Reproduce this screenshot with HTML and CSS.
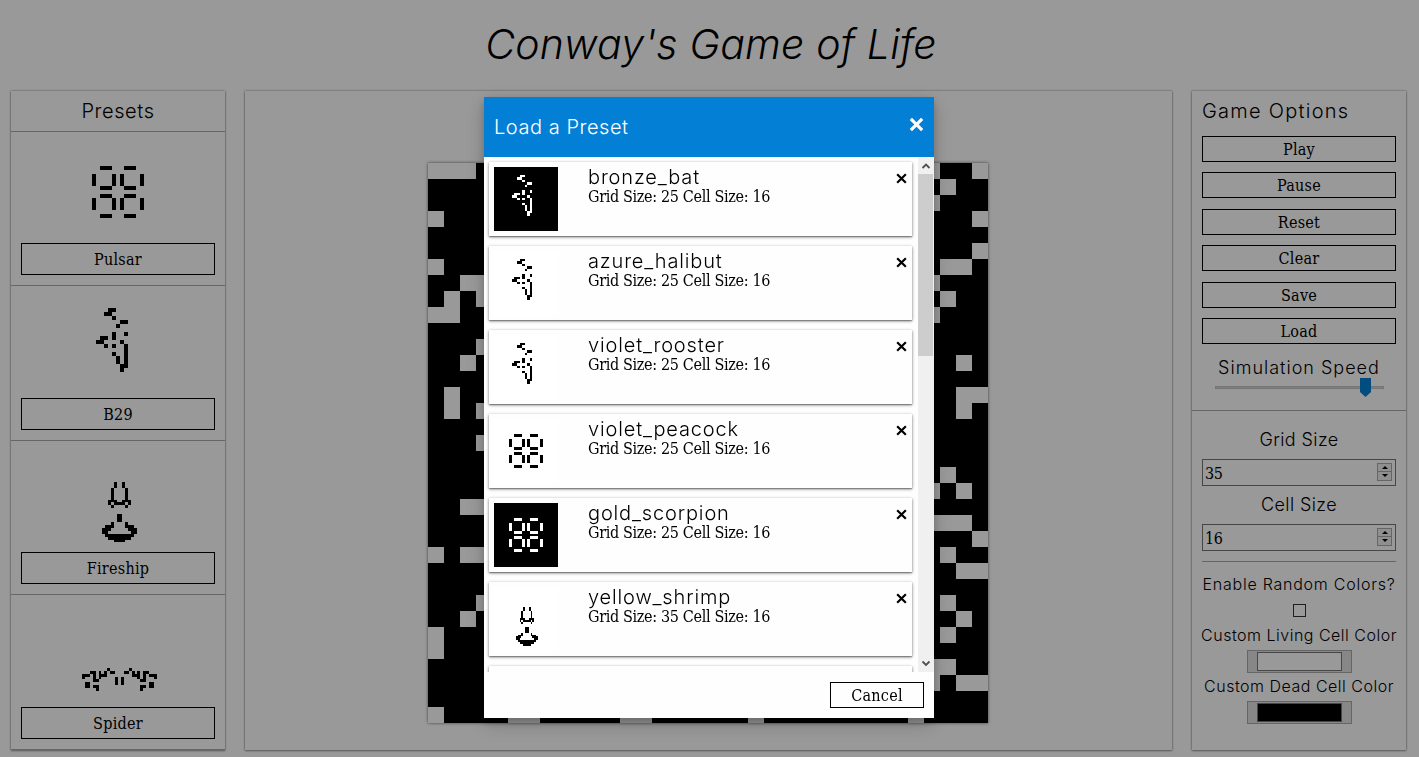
FILE: index.html
```html
<!DOCTYPE html>
<html lang="en">
<head>
<meta charset="utf-8">
<title>Conway's Game of Life</title>
<link rel="stylesheet" href="styles.css">
</head>
<body>
<svg class="defs" aria-hidden="true">
  <symbol id="pulsar" viewBox="0 -.5 25 25"><path d="M8 6h3M14 6h3M8 11h3M14 11h3M8 13h3M14 13h3M8 18h3M14 18h3M6 8h1M11 8h1M13 8h1M18 8h1M6 9h1M11 9h1M13 9h1M18 9h1M6 10h1M11 10h1M13 10h1M18 10h1M6 14h1M11 14h1M13 14h1M18 14h1M6 15h1M11 15h1M13 15h1M18 15h1M6 16h1M11 16h1M13 16h1M18 16h1"/></symbol>
  <symbol id="b29" viewBox="0 -.5 25 25"><path d="M10 3h2M9 4h2M11 5h1M13 6h2M12 7h1M11 9h1M14 9h1M8 10h2M11 10h1M7 11h2M13 11h1M9 12h1M11 12h1M14 12h1M14 13h1M11 14h1M14 14h1M12 15h1M14 15h1M12 16h1M14 16h1M13 17h2M13 18h1"/></symbol>
  <symbol id="fireship" viewBox="0 -.5 35 35"><path d="M16 11h1M19 11h1M16 12h1M19 12h1M15 13h1M20 13h1M15 14h1M20 14h1M15 15h1M20 15h1M15 16h1M20 16h1M14 17h3M19 17h3M14 18h1M16 18h4M21 18h1M15 19h1M20 19h1M17 22h2M17 23h2M17 24h2M15 25h1M20 25h1M13 26h3M20 26h3M12 27h3M21 27h3M12 28h2M22 28h2M13 29h10M14 30h8M16 31h4"/></symbol>
  <symbol id="spider" viewBox="0 -1.300 36 36"><path d="M14 22h1M22 22h1M8 23h2M11 23h1M13 23h1M15 23h2M20 23h2M23 23h1M25 23h1M27 23h2M5 24h3M9 24h1M11 24h3M23 24h3M27 24h1M29 24h3M5 25h1M9 25h1M11 25h1M17 25h1M19 25h1M25 25h1M27 25h1M31 25h1M9 26h2M17 26h1M19 26h1M26 26h2M6 27h2M17 27h1M19 27h1M29 27h2M6 28h2M9 28h2M26 28h2M29 28h2M10 29h1M26 29h1"/></symbol>
  <symbol id="cross" viewBox="0 0 12 12"><path d="M2 2l8 8M10 2l-8 8"/></symbol>
</svg>

<h1 class="title"><span>Conway's Game of Life</span></h1>

<main class="layout">
  <aside class="panel presets">
    <h2 class="presets-title">Presets</h2>
    <div class="preset"><svg class="cells"><use href="#pulsar"/></svg><button class="btn tall">Pulsar</button></div>
    <div class="preset"><svg class="cells"><use href="#b29"/></svg><button class="btn tall">B29</button></div>
    <div class="preset"><svg class="cells"><use href="#fireship"/></svg><button class="btn tall">Fireship</button></div>
    <div class="preset"><svg class="cells"><use href="#spider"/></svg><button class="btn tall">Spider</button></div>
  </aside>

  <section class="panel stage">
    <svg class="board" viewBox="0 -.5 35 35"><path d="M0 0h3M31 0h1M34 0h1M32 1h1M31 2h1M0 3h1M34 3h1M34 5h1M0 6h1M32 6h2M2 7h2M31 7h1M1 8h1M3 8h1M32 8h1M0 9h2M31 9h1M3 11h1M2 12h1M33 12h1M1 14h1M33 14h2M1 15h1M3 15h1M33 15h1M3 17h1M32 19h1M31 20h1M33 20h1M2 21h2M31 22h3M34 23h1M0 24h1M2 24h2M32 24h1M33 25h2M3 27h1M32 27h1M2 28h1M33 28h1M0 29h1M32 29h1M0 30h1M31 31h2M31 32h1M33 32h2M0 34h1M5 34h2M12 34h2M20 34h1M30 34h1"/></svg>
  </section>

  <aside class="panel options">
    <div class="controls">
      <h2 class="options-title">Game Options</h2>
      <div class="stack">
        <button class="btn">Play</button>
        <button class="btn">Pause</button>
        <button class="btn">Reset</button>
        <button class="btn">Clear</button>
        <button class="btn">Save</button>
        <button class="btn">Load</button>
      </div>
      <div class="label speed-label">Simulation Speed</div>
      <div class="slider"><svg class="thumb" viewBox="0 0 11 19"><path d="M0 0h11v14l-5.500 5l-5.500-5z"/></svg></div>
    </div>
    <div class="settings">
      <div class="label">Grid Size</div>
      <div class="number"><span>35</span><span class="spin"><i class="up"></i><i class="down"></i></span></div>
      <div class="label second">Cell Size</div>
      <div class="number"><span>16</span><span class="spin"><i class="up"></i><i class="down"></i></span></div>
      <hr class="rule">
      <div class="small random">Enable Random Colors?</div>
      <div class="check"></div>
      <div class="small">Custom Living Cell Color</div>
      <div class="color"><i></i></div>
      <div class="small">Custom Dead Cell Color</div>
      <div class="color dead"><i></i></div>
    </div>
  </aside>
</main>

<div class="overlay">
  <div class="modal">
    <header class="modal-head"><h2>Load a Preset</h2><svg class="close"><use href="#cross"/></svg></header>
    <div class="modal-body">
      <div class="list">
        <div class="item"><svg class="thumbnail dark"><use href="#b29"/></svg><div class="info"><h3>bronze_bat</h3><p>Grid Size: 25 Cell Size: 16</p></div><svg class="remove"><use href="#cross"/></svg></div>
        <div class="item"><svg class="thumbnail"><use href="#b29"/></svg><div class="info"><h3>azure_halibut</h3><p>Grid Size: 25 Cell Size: 16</p></div><svg class="remove"><use href="#cross"/></svg></div>
        <div class="item"><svg class="thumbnail"><use href="#b29"/></svg><div class="info"><h3>violet_rooster</h3><p>Grid Size: 25 Cell Size: 16</p></div><svg class="remove"><use href="#cross"/></svg></div>
        <div class="item"><svg class="thumbnail"><use href="#pulsar"/></svg><div class="info"><h3>violet_peacock</h3><p>Grid Size: 25 Cell Size: 16</p></div><svg class="remove"><use href="#cross"/></svg></div>
        <div class="item"><svg class="thumbnail dark"><use href="#pulsar"/></svg><div class="info"><h3>gold_scorpion</h3><p>Grid Size: 25 Cell Size: 16</p></div><svg class="remove"><use href="#cross"/></svg></div>
        <div class="item"><svg class="thumbnail"><use href="#fireship"/></svg><div class="info"><h3>yellow_shrimp</h3><p>Grid Size: 35 Cell Size: 16</p></div><svg class="remove"><use href="#cross"/></svg></div>
        <div class="item"></div>
      </div>
      <div class="scrollbar">
        <svg class="arrow" viewBox="0 0 16 17"><path d="M4.500 11l3.500-3.500l3.500 3.500"/></svg>
        <div class="grip"></div>
        <svg class="arrow last" viewBox="0 0 16 17"><path d="M4.500 6.500l3.500 3.500l3.500-3.500"/></svg>
      </div>
    </div>
    <footer class="modal-foot"><button class="btn cancel">Cancel</button></footer>
  </div>
</div>
</body>
</html>
```
FILE: styles.css
```css
* { box-sizing: border-box; }
body {
  margin: 0;
  height: 757px;
  overflow: hidden;
  background: #fff;
  color: #000;
  font-family: "DejaVu Serif Condensed", "DejaVu Serif", serif;
  font-stretch: condensed;
}
h1, h2, h3, p { margin: 0; font-weight: 300; }
h1, h2, h3, .label, .small { font-family: Inter, "Open Sans", sans-serif; font-weight: 300; }
.defs { display: block; width: 0; height: 0; }

.title {
  height: 91px;
  padding: 20px 0 0 3px;
  text-align: center;
  font-size: 41px;
  line-height: 48px;
  font-style: italic;
  letter-spacing: .2px;
}
.layout {
  display: grid;
  grid-template-columns: 214px 927px 214px;
  column-gap: 20px;
  height: 659px;
  padding-left: 11px;
}
.panel {
  background: #fff;
  box-shadow: 0 0 2px rgba(0, 0, 0, .45), 0 1px 2px rgba(0, 0, 0, .3);
}

.btn {
  display: block;
  width: 100%;
  height: 26px;
  padding: 0;
  border: 1px solid #000;
  background: transparent;
  color: #000;
  font: inherit;
  font-size: 16px;
  line-height: 25px;
  letter-spacing: .25px;
  text-align: center;
}
.btn.tall { height: 32px; padding-top: 1px; line-height: 30px; }

.presets-title {
  height: 41px;
  border-bottom: 1px solid #aaa;
  font-size: 20px;
  line-height: 40px;
  text-align: center;
  letter-spacing: .6px;
}
.preset {
  height: 154.400px;
  padding: 10px 10px 0;
  border-bottom: 1px solid #aaa;
}
.cells {
  display: block;
  width: 100px;
  height: 100px;
  margin: 0 auto 1.350px;
}
.cells, .thumbnail, .board { stroke: #000; stroke-width: 1; fill: none; shape-rendering: crispEdges; }

.stage { padding: 72px 0 0 183px; }
.board {
  display: block;
  width: 560px;
  height: 560px;
  background: #000;
  stroke: #fff;
  box-shadow: 0 0 3px rgba(0, 0, 0, .6);
}

.controls { height: 320px; padding: 0 10px; border-bottom: 1px solid #aaa; }
.options-title { height: 45px; font-size: 20px; line-height: 40px; letter-spacing: 1.250px; white-space: nowrap; }
.stack { display: grid; row-gap: 10.400px; }
.label { font-size: 18px; line-height: 24px; text-align: center; letter-spacing: .4px; }
.speed-label { margin-top: 12px; letter-spacing: 1px; }
.slider {
  position: relative;
  width: 169px;
  height: 3px;
  margin: 6px auto 0 13px;
  background: #d8d8d8;
  border: 1px solid #c4c4c4;
}
.thumb { position: absolute; left: 144px; top: -9px; width: 11px; height: 19px; fill: #0380d6; }

.settings { padding: 17px 10px 0; }
.number {
  display: flex;
  justify-content: space-between;
  align-items: center;
  height: 27px;
  margin-top: 7px;
  padding: 0 3px 0 2px;
  border: 1px solid #767676;
  font-size: 16px;
  letter-spacing: -.3px;
}
.number > span:first-child { padding-top: 1px; }
.label.second { margin-top: 7px; }
.spin {
  display: grid;
  grid-template-rows: 1fr 1fr;
  row-gap: 1px;
  width: 15px;
  height: 18px;
  border: 1px solid #aaa;
  background: #aaa;
  margin-bottom: 2px;
}
.spin i { display: flex; align-items: center; justify-content: center; background: #efefef; }
.spin i::before { content: ""; border: 3px solid transparent; border-top-width: 0; border-bottom: 3px solid #000; }
.spin .down::before { transform: scaleY(-1); }
.rule { height: 1px; margin: 10px 0 11px; border: 0; background: #aaa; }
.small { font-size: 16px; line-height: 22px; margin: 0 -10px; text-align: center; white-space: nowrap; letter-spacing: .5px; }
.small.random { letter-spacing: .75px; }
.check { width: 13px; height: 13px; margin: 9px auto 7px; border: 1px solid #333; }
.color {
  width: 105px;
  height: 23px;
  margin: 4px auto 2px;
  padding: 1px 9px;
  border: 1px solid #aaa;
  background: #e1e1e1;
}
.color i { display: block; height: 19px; border: 1px solid #777; background: #fff; }
.color.dead i { background: #000; }

.overlay {
  position: fixed;
  inset: 0;
  display: flex;
  justify-content: center;
  align-items: flex-start;
  padding-top: 97px;
  background: rgba(0, 0, 0, .4);
}
.modal {
  display: flex;
  flex-direction: column;
  width: 450px;
  height: 621px;
  margin-right: 1px;
  background: #fefefe;
  box-shadow: 0 4px 8px rgba(0, 0, 0, .2), 0 6px 20px rgba(0, 0, 0, .19);
}
.modal-head {
  display: flex;
  justify-content: space-between;
  height: 60px;
  padding: 0 9px 0 10px;
  background: #0380d6;
  color: #fff;
}
.modal-head h2 { font-size: 20px; line-height: 60px; letter-spacing: .550px; }
.close { width: 17px; height: 17px; margin-top: 19px; stroke: #fff; stroke-width: 2.200; }
.modal-body { display: flex; height: 515px; overflow: hidden; }
.list { width: 434px; padding: 5px; }
.item {
  display: flex;
  width: 423px;
  height: 74px;
  margin-bottom: 10px;
  padding: 5px 4px 5px 5px;
  box-shadow: 0 1px 3px rgba(0, 0, 0, .5), 0 1px 1px rgba(0, 0, 0, .25);
}
.thumbnail { width: 64px; height: 64px; background: #fff; }
.thumbnail.dark { background: #000; stroke: #fff; }
.info { flex: 1; padding-left: 30px; }
.info h3 { font-size: 20px; line-height: 20px; letter-spacing: .850px; }
.info p { font-size: 16px; line-height: 20px; letter-spacing: -.340px; }
.remove { width: 13px; height: 13px; margin: 5px 0 0; stroke: #000; stroke-width: 2; }
.scrollbar { display: flex; flex-direction: column; width: 16px; background: #f0f0f0; }
.arrow { width: 16px; height: 17px; fill: none; stroke: #505050; stroke-width: 1.800; }
.grip { width: 15px; height: 182px; background: #cdcdcd; }
.arrow.last { margin-top: auto; }
.modal-foot { display: flex; justify-content: flex-end; padding: 10px; }
.cancel { width: 94px; }
```
